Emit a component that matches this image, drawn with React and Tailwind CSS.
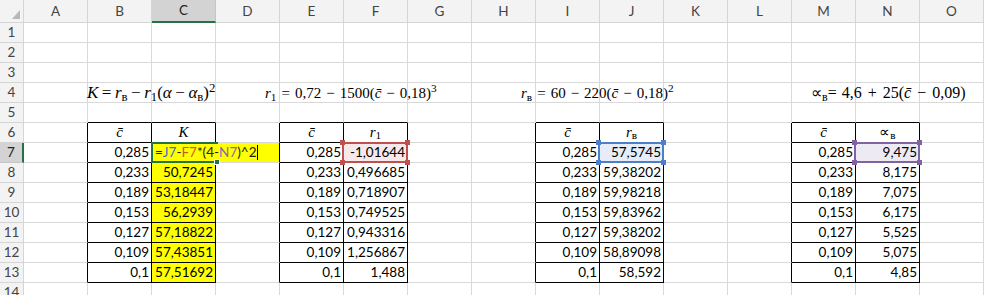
import React from "react";

const COLS = ["A", "B", "C", "D", "E", "F", "G", "H", "I", "J", "K", "L", "M", "N", "O"];
const TABLE_COLS = [1, 2, 4, 5, 8, 9, 12, 13];

const cVals = ["0,285", "0,233", "0,189", "0,153", "0,127", "0,109", "0,1"];
const kVals = [null, "50,7245", "53,18447", "56,2939", "57,18822", "57,43851", "57,51692"];
const r1Vals = ["-1,01644", "0,496685", "0,718907", "0,749525", "0,943316", "1,256867", "1,488"];
const rvVals = ["57,5745", "59,38202", "59,98218", "59,83962", "59,38202", "58,89098", "58,592"];
const avVals = ["9,475", "8,175", "7,075", "6,175", "5,525", "5,075", "4,85"];

const Cbar = () => <span className="font-['Liberation_Serif',serif] italic text-[15px]">c&#772;</span>;

function Num({ children }) {
  return <div className="h-full flex items-center justify-end pr-[2px] whitespace-nowrap">{children}</div>;
}

function Head({ children }) {
  return <div className="h-full flex items-center justify-center font-['Liberation_Serif',serif] text-[15px]">{children}</div>;
}

// coloured range box drawn over a cell referenced in the formula
function RefBox({ line, dot }) {
  return (
    <div className={`absolute left-[-2px] top-[-1px] right-[-1px] bottom-[-1px] z-10 border-2 ${line}`}>
      <span className={`absolute left-[-4px] top-[-4px] w-[5px] h-[5px] ${dot}`} />
      <span className={`absolute right-[-4px] top-[-4px] w-[5px] h-[5px] ${dot}`} />
      <span className={`absolute left-[-4px] bottom-[-4px] w-[5px] h-[5px] ${dot}`} />
      <span className={`absolute right-[-4px] bottom-[-4px] w-[5px] h-[5px] ${dot}`} />
    </div>
  );
}

function cellContent(r, c) {
  if (r === 6) {
    if ([1, 4, 8, 12].includes(c)) return <Head><Cbar /></Head>;
    if (c === 2) return <Head><i>K</i></Head>;
    if (c === 5) return <Head><i>r</i><sub>1</sub></Head>;
    if (c === 9) return <Head><i>r</i><sub>в</sub></Head>;
    if (c === 13) return <Head>∝<sub>в</sub></Head>;
  }
  if (r >= 7 && r <= 13) {
    const i = r - 7;
    if ([1, 4, 8, 12].includes(c)) return <Num>{cVals[i]}</Num>;
    if (c === 2 && kVals[i]) return <Num>{kVals[i]}</Num>;
    if (c === 5) return <Num>{r1Vals[i]}</Num>;
    if (c === 9) return <Num>{rvVals[i]}</Num>;
    if (c === 13) return <Num>{avVals[i]}</Num>;
  }
  return null;
}

function Cell({ r, c }) {
  const inRows = r >= 6 && r <= 13;
  const rightBlack = inRows && (TABLE_COLS.includes(c) || TABLE_COLS.includes(c + 1));
  const bottomBlack = TABLE_COLS.includes(c) && r >= 5 && r <= 13;
  const yellow = (c === 2 && r >= 7 && r <= 13) || (c === 3 && r === 7);

  let fill = yellow ? "bg-[#ffff00]" : "bg-white";
  if (r === 7 && c === 5) fill = "bg-[#f7e9ea]";
  if (r === 7 && c === 9) fill = "bg-[#e6edf8]";
  if (r === 7 && c === 13) fill = "bg-[#eeeaf4]";

  const special = r === 7 && [2, 5, 9, 13].includes(c);

  return (
    <div
      className={`h-[20px] border-r border-b ${rightBlack ? "border-r-black" : "border-r-[#d9d9d9]"} ${
        bottomBlack ? "border-b-black" : "border-b-[#d9d9d9]"
      } ${fill} ${special ? "relative z-10" : ""}`}
    >
      {cellContent(r, c)}
      {r === 7 && c === 2 && (
        <>
          <div className="absolute left-[-1px] top-0 w-[128px] h-[19px] bg-[#ffff00] z-10 flex items-center pl-[4px] whitespace-nowrap text-[#222]">
            <span>=</span>
            <span className="text-[#3f6fc0]">J7</span>
            <span>-</span>
            <span className="text-[#d4572a]">F7</span>
            <span>*(4-</span>
            <span className="text-[#8a6aa8]">N7</span>
            <span>)^2</span>
            <span className="inline-block w-px h-[15px] bg-black ml-[1px]" />
          </div>
          <div className="absolute left-[-1px] top-[-1px] right-[-3px] bottom-[-1px] z-20 border-l-2 border-t-2 border-b-2 border-[#217346]">
            <span className="absolute right-[-2px] bottom-[-4px] w-[6px] h-[6px] bg-[#217346] border border-white" />
          </div>
        </>
      )}
      {r === 7 && c === 5 && <RefBox line="border-[#c0504d]" dot="bg-[#c0504d]" />}
      {r === 7 && c === 9 && <RefBox line="border-[#4f7ec8]" dot="bg-[#4f7ec8]" />}
      {r === 7 && c === 13 && <RefBox line="border-[#8064a2]" dot="bg-[#8064a2]" />}
    </div>
  );
}

function Equations() {
  return (
    <div className="font-['Liberation_Serif',serif] text-black whitespace-nowrap">
      <div className="absolute left-[87px] top-[83px] h-[20px] flex items-center z-30 text-[17px]">
        <span>
          <i>K</i>
          <span className="px-[3.5px]">=</span>
          <i>r</i><sub>в</sub>
          <span className="px-[3.5px]">−</span>
          <i>r</i><sub>1</sub>(<i>α</i>
          <span className="px-[3.5px]">−</span>
          <i>α</i><sub>в</sub>)<sup>2</sup>
        </span>
      </div>
      <div className="absolute left-[265px] top-[83px] h-[20px] flex items-center z-30 text-[15px]">
        <span>
          <i>r</i><sub>1</sub>
          <span className="px-[5px]">=</span>
          0,72
          <span className="px-[5px]">−</span>
          1500(<i>c&#772;</i>
          <span className="px-[5px]">−</span>
          0,18)<sup>3</sup>
        </span>
      </div>
      <div className="absolute left-[521px] top-[83px] h-[20px] flex items-center z-30 text-[15px]">
        <span>
          <i>r</i><sub>в</sub>
          <span className="px-[5px]">=</span>
          60
          <span className="px-[5px]">−</span>
          220(<i>c&#772;</i>
          <span className="px-[5px]">−</span>
          0,18)<sup>2</sup>
        </span>
      </div>
      <div className="absolute left-[811px] top-[83px] h-[20px] flex items-center z-30 text-[16px]">
        <span>
          ∝<sub>в</sub>
          <span className="pr-[5px]">=</span>
          4,6
          <span className="px-[6px]">+</span>
          25(<i>c&#772;</i>
          <span className="px-[6px]">−</span>
          0,09)
        </span>
      </div>
    </div>
  );
}

export default function App() {
  const rows = Array.from({ length: 14 }, (_, i) => i + 1);
  return (
    <div className="w-[987px] h-[295px] overflow-hidden bg-white font-[Lato,sans-serif] text-[13.5px] text-black">
      <div className="relative grid grid-cols-[24px_repeat(15,64px)] w-max">
        {/* corner */}
        <div className="h-[23px] bg-[#f3f3f3] border-r border-b border-[#d5d5d5] flex items-end justify-end pr-[3px] pb-[3px]">
          <svg width="8" height="9" viewBox="0 0 8 9">
            <polygon points="8,0 8,9 0,9" fill="#b8b8b8" />
          </svg>
        </div>
        {COLS.map((l, c) => (
          <div
            key={l}
            className={`h-[23px] border-r flex items-center justify-center text-[13.5px] ${
              c === 2
                ? "bg-[#d3d3d3] text-[#222] border-r-[#c6c6c6] border-b-2 border-b-[#217346]"
                : "bg-[#f3f3f3] text-[#444] border-r-[#d5d5d5] border-b border-b-[#d5d5d5]"
            }`}
          >
            {l}
          </div>
        ))}
        {rows.map((r) => (
          <React.Fragment key={r}>
            <div
              className={`h-[20px] border-b flex items-center justify-center text-[13.5px] ${
                r === 7
                  ? "bg-[#d3d3d3] text-[#222] border-b-[#c6c6c6] border-r-2 border-r-[#217346]"
                  : "bg-[#f3f3f3] text-[#444] border-b-[#d5d5d5] border-r border-r-[#d5d5d5]"
              }`}
            >
              {r}
            </div>
            {COLS.map((l, c) => (
              <Cell key={l} r={r} c={c} />
            ))}
          </React.Fragment>
        ))}
        <Equations />
      </div>
    </div>
  );
}
